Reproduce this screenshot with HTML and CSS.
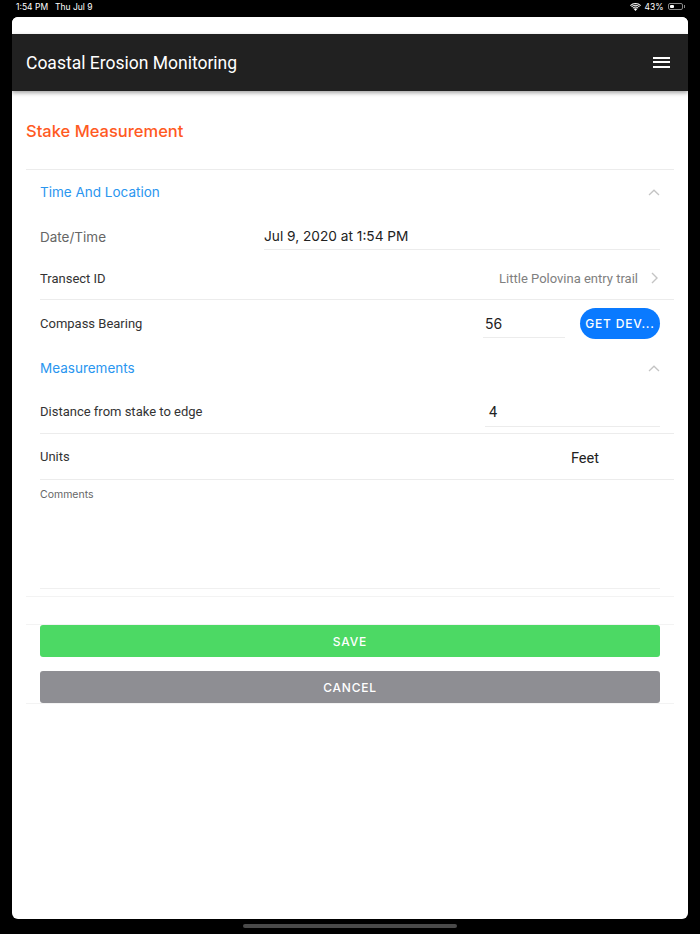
FILE: index.html
```html
<!DOCTYPE html>
<html>
<head>
<meta charset="utf-8">
<link rel="stylesheet" href="styles.css">
</head>
<body>
<div class="statusbar">
  <div class="sb-left"><span>1:54 PM</span><span>Thu Jul 9</span></div>
  <div class="sb-right">
    <svg class="wifi" width="11" height="8" viewBox="0 0 11 8"><path d="M5.5 8 L3.7 6.1 A2.6 2.6 0 0 1 7.3 6.1 Z" fill="#fff"/><path d="M2.5 4.9 A4.3 4.3 0 0 1 8.5 4.9 L7.8 5.6 A3.3 3.3 0 0 0 3.2 5.6 Z" fill="#fff"/><path d="M1.2 3.6 A6.1 6.1 0 0 1 9.8 3.6 L9.1 4.3 A5.1 5.1 0 0 0 1.9 4.3 Z" fill="#fff"/><path d="M0 2.3 A7.9 7.9 0 0 1 11 2.3 L10.3 3 A6.9 6.9 0 0 0 0.7 3 Z" fill="#fff"/></svg>
    <span>43%</span>
    <span class="battery"><span class="battery-level"></span></span><span class="battery-tip"></span>
  </div>
</div>
<div class="card">
  <div class="topstrip"></div>
  <header class="appbar">
    <div class="app-title">Coastal Erosion Monitoring</div>
    <div class="menu"><span></span><span></span><span></span></div>
  </header>
  <main class="content">
    <h1 class="page-title">Stake Measurement</h1>
    <div class="divider"></div>
    <div class="section">
      <div class="sec-head">
        <span>Time And Location</span>
        <svg class="chev-up" width="12" height="7" viewBox="0 0 12 7"><path d="M1 6 L6 1.2 L11 6" fill="none" stroke="#c4c4c4" stroke-width="1.3"/></svg>
      </div>
      <div class="row row-date">
        <span class="label gray">Date/Time</span>
        <div class="date-field">Jul 9, 2020 at 1:54 PM</div>
      </div>
      <div class="row row-line row-transect">
        <span class="label">Transect ID</span>
        <div class="picker"><span>Little Polovina entry trail</span>
          <svg width="7" height="12" viewBox="0 0 7 12"><path d="M1 1 L6 6 L1 11" fill="none" stroke="#c4c4c4" stroke-width="1.4"/></svg>
        </div>
      </div>
      <div class="row row-compass">
        <span class="label">Compass Bearing</span>
        <div class="compass">
          <div class="num-field">56</div>
          <button class="get-btn">GET DEV...</button>
        </div>
      </div>
      <div class="sec-head">
        <span>Measurements</span>
        <svg class="chev-up" width="12" height="7" viewBox="0 0 12 7"><path d="M1 6 L6 1.2 L11 6" fill="none" stroke="#c4c4c4" stroke-width="1.3"/></svg>
      </div>
      <div class="row row-line row-dist">
        <span class="label">Distance from stake to edge</span>
        <div class="dist-field">4</div>
      </div>
      <div class="row row-line row-units">
        <span class="label">Units</span>
        <span class="units-val">Feet</span>
      </div>
      <div class="comments">
        <span class="comments-label">Comments</span>
        <div class="comments-box"></div>
      </div>
    </div>
    <div class="divider faint"></div>
    <div class="actions">
      <button class="btn save">SAVE</button>
      <button class="btn cancel">CANCEL</button>
    </div>
  </main>
</div>
<div class="home-indicator"></div>
</body>
</html>
```

FILE: styles.css
```css
html, body {
  margin: 0;
  padding: 0;
}
body {
  background: #000;
  width: 700px;
  height: 934px;
  overflow: hidden;
  font-family: Inter, "Noto Sans", sans-serif;
  display: flex;
  flex-direction: column;
}
.statusbar {
  height: 17px;
  display: flex;
  justify-content: space-between;
  align-items: center;
  padding: 0 15px 0 16px;
  color: #fff;
  font-size: 8.5px;
  font-family: Inter, sans-serif;
}
.sb-left {
  display: flex;
  gap: 7px;
  margin-top: -4px;
}
.sb-right {
  display: flex;
  align-items: center;
  gap: 3px;
  margin-top: -4px;
}
.battery {
  width: 15px;
  height: 7px;
  border: 1px solid #888;
  border-radius: 2px;
  box-sizing: border-box;
  padding: 1px;
  display: flex;
  margin-left: 1px;
}
.battery-level {
  width: 43%;
  background: #fff;
  border-radius: 1px;
}
.battery-tip {
  width: 1.5px;
  height: 3px;
  background: #888;
  margin-left: -2px;
}
.card {
  margin: 0 12px;
  height: 902px;
  background: #fff;
  border-radius: 6px;
  overflow: hidden;
  display: flex;
  flex-direction: column;
}
.topstrip {
  height: 17px;
  background: #fff;
}
.appbar {
  height: 57px;
  background: #212121;
  display: flex;
  align-items: center;
  justify-content: space-between;
  padding: 0 18px 0 14px;
  box-shadow: 0 2px 4px rgba(0,0,0,0.35);
  position: relative;
  z-index: 1;
}
.app-title {
  color: #fff;
  font-family: Roboto, sans-serif;
  font-size: 17.5px;
  margin-top: 1px;
}
.menu {
  display: flex;
  flex-direction: column;
  gap: 2.5px;
  width: 17px;
  margin-top: -1px;
}
.menu span {
  height: 2px;
  background: #fff;
  display: block;
}
.content {
  padding: 0 14px;
  display: flex;
  flex-direction: column;
}
.page-title {
  margin: 0;
  padding: 28px 0 0;
  height: 51px;
  box-sizing: border-box;
  font-size: 16.5px;
  font-weight: 500;
  color: #ff5a1f;
  line-height: 24px;
}
.divider {
  height: 1px;
  background: #ececec;
  margin-top: 27px;
}
.divider.faint {
  background: #f3f3f3;
  margin-top: 7px;
}
.section {
  padding-left: 14px;
  display: flex;
  flex-direction: column;
}
.sec-head {
  height: 44px;
  display: flex;
  align-items: center;
  justify-content: space-between;
  padding-right: 14px;
  color: #2a96ef;
  font-size: 13.5px;
}
.row {
  display: flex;
  align-items: center;
  justify-content: space-between;
  font-size: 13px;
  font-family: Roboto, sans-serif;
  color: #333;
  box-sizing: border-box;
}
.label.gray {
  color: #666;
  font-family: Inter, sans-serif;
  font-size: 13.5px;
}
.row-date {
  height: 43px;
  padding-right: 14px;
  align-items: flex-start;
}
.row-date .label {
  margin-top: 15px;
}
.date-field {
  width: 396px;
  margin-top: 14px;
  padding-bottom: 5px;
  border-bottom: 1px solid #ececec;
  font-family: Inter, sans-serif;
  font-size: 13.7px;
  color: #222;
}
.row-line {
  border-bottom: 1px solid #ececec;
}
.row-transect {
  height: 43px;
  padding-right: 16px;
}
.picker {
  display: flex;
  align-items: center;
  gap: 13px;
  color: #808080;
  font-size: 13px;
}
.row-compass {
  height: 46px;
  padding-right: 14px;
}
.compass {
  display: flex;
  align-items: center;
  gap: 15px;
}
.num-field {
  width: 80px;
  padding: 4px 0 5px 2px;
  border-bottom: 1px solid #ececec;
  font-family: Inter, sans-serif;
  font-size: 14px;
  color: #222;
  margin-top: 2px;
}
.get-btn {
  width: 80px;
  height: 31px;
  border: none;
  border-radius: 16px;
  background: #0a7aff;
  color: #fff;
  font-family: Inter, sans-serif;
  font-size: 12px;
  font-weight: 500;
  letter-spacing: 0.8px;
  padding: 0;
}
.row-dist {
  height: 44px;
  padding-right: 14px;
  align-items: flex-start;
}
.row-dist .label {
  margin-top: 14px;
}
.dist-field {
  width: 175px;
  margin-top: 14px;
  padding: 0 0 5px 4px;
  border-bottom: 1px solid #ececec;
  font-size: 14.5px;
  color: #222;
  box-sizing: border-box;
}
.row-units {
  height: 46px;
  padding-right: 75px;
}
.units-val {
  font-size: 14.5px;
  color: #222;
  margin-top: 3px;
}
.comments {
  display: flex;
  flex-direction: column;
  padding-right: 14px;
  height: 109px;
  box-sizing: border-box;
}
.comments-label {
  font-size: 10.5px;
  color: #666;
  margin-top: 8px;
}
.comments-box {
  flex: 1;
  border-bottom: 1px solid #f0f0f0;
}
.actions {
  margin-top: 27px;
  border-top: 1px solid #f3f3f3;
  border-bottom: 1px solid #f3f3f3;
  padding: 0 14px;
  display: flex;
  flex-direction: column;
  gap: 14px;
}
.btn {
  height: 32px;
  border: none;
  border-radius: 3px;
  color: #fff;
  font-family: Inter, sans-serif;
  font-size: 12px;
  font-weight: 500;
  letter-spacing: 0.8px;
  padding: 0;
}
.btn.save {
  background: #4cd964;
}
.btn.cancel {
  background: #8e8e93;
}
.home-indicator {
  width: 214px;
  height: 4px;
  border-radius: 2px;
  background: #4a4a4a;
  margin: 5px auto 0;
}
```
